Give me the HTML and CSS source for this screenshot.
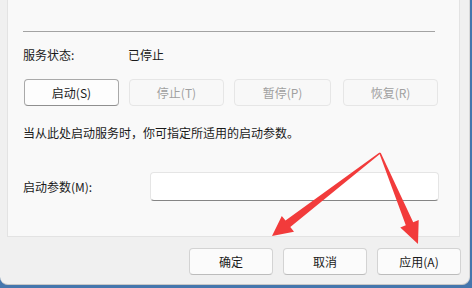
FILE: index.html
```html
<!DOCTYPE html>
<html lang="zh-CN">
<head>
<meta charset="utf-8">
<link rel="stylesheet" href="styles.css">
</head>
<body>
<div class="dialog">
  <div class="panel">
    <div class="rule"></div>
    <div class="status-row">
      <span class="label">服务状态:</span>
      <span class="value">已停止</span>
    </div>
    <div class="btn-row">
      <button class="btn btn-default">启动(S)</button>
      <button class="btn btn-disabled">停止(T)</button>
      <button class="btn btn-disabled btn-wide">暂停(P)</button>
      <button class="btn btn-disabled btn-last">恢复(R)</button>
    </div>
    <p class="desc">当从此处启动服务时，你可指定所适用的启动参数。</p>
    <div class="param-row">
      <span class="param-label">启动参数(M):</span>
      <div class="input"></div>
    </div>
  </div>
  <div class="footer">
    <button class="btn fbtn">确定</button>
    <button class="btn fbtn">取消</button>
    <button class="btn fbtn">应用(A)</button>
  </div>
  <svg class="arrows" width="472" height="288" viewBox="0 0 472 288">
    <polygon fill="#f23b3b" points="380.5,153.6 290.3,227 294,231.7 272,236 281.8,215.9 285.5,220.6 379.5,152.4"/>
    <polygon fill="#f23b3b" points="379.3,153.3 405.8,225.2 400.3,227.6 418,244 418.7,219.9 413.2,222.2 380.7,152.7"/>
  </svg>
</div>
</body>
</html>
```
FILE: styles.css
```css
* { box-sizing: border-box; }
html, body {
  margin: 0;
  padding: 0;
}
body {
  width: 472px;
  height: 288px;
  background: #4576ad;
  font-family: "Noto Sans CJK SC", "Microsoft YaHei", sans-serif;
  font-size: 12px;
  color: #1a1a1a;
  overflow: hidden;
}
.dialog {
  position: relative;
  width: 470px;
  height: 285px;
  background: #f0f0f0;
  border-right: 1px solid #d8d8d8;
  border-bottom: 1px solid #c8c8c8;
  border-radius: 0 0 8px 8px;
  display: flex;
  flex-direction: column;
}
.panel {
  margin-left: 7px;
  width: 453px;
  height: 237px;
  background: #f9f9f9;
  border: 1px solid #e3e3e3;
  border-top: none;
  padding-left: 15px;
  display: flex;
  flex-direction: column;
}
.rule {
  margin-top: 31px;
  width: 412px;
  height: 1px;
  background: #a3a3a3;
}
.status-row {
  margin-top: 15px;
  height: 16px;
  line-height: 16px;
  display: flex;
}
.label { width: 105px; }
.btn-row {
  margin-top: 16px;
  display: flex;
  gap: 10px;
  padding-left: 1px;
}
.btn {
  font-family: inherit;
  font-size: 12px;
  height: 27px;
  width: 95px;
  padding: 0;
  border-radius: 4px;
  background: #fdfdfd;
  border: 1px solid #d3d3d3;
  border-bottom-color: #bcbcbc;
  color: #1a1a1a;
  line-height: 25px;
}
.btn-default {
  border-color: #a9a9a9;
  border-bottom-color: #8f8f8f;
}
.btn-disabled {
  background: #f8f8f8;
  border-color: #e6e6e6;
  color: #a0a0a0;
}
.btn-wide { width: 97px; }
.btn-last { margin-left: 2px; }
.desc {
  margin: 19px 0 0;
  line-height: 16px;
  height: 16px;
}
.param-row {
  margin-top: 31px;
  display: flex;
  align-items: center;
  height: 29px;
}
.param-label { width: 127px; }
.input {
  width: 289px;
  height: 29px;
  background: #ffffff;
  border: 1px solid #e5e5e5;
  border-bottom: 1px solid #858585;
  border-radius: 4px;
}
.footer {
  margin-top: 11px;
  display: flex;
  justify-content: flex-end;
  gap: 10px;
  padding-right: 8px;
}
.fbtn {
  width: 84px;
  background: #fbfbfb;
}
.arrows {
  position: absolute;
  left: 0;
  top: 0;
  pointer-events: none;
}
```
